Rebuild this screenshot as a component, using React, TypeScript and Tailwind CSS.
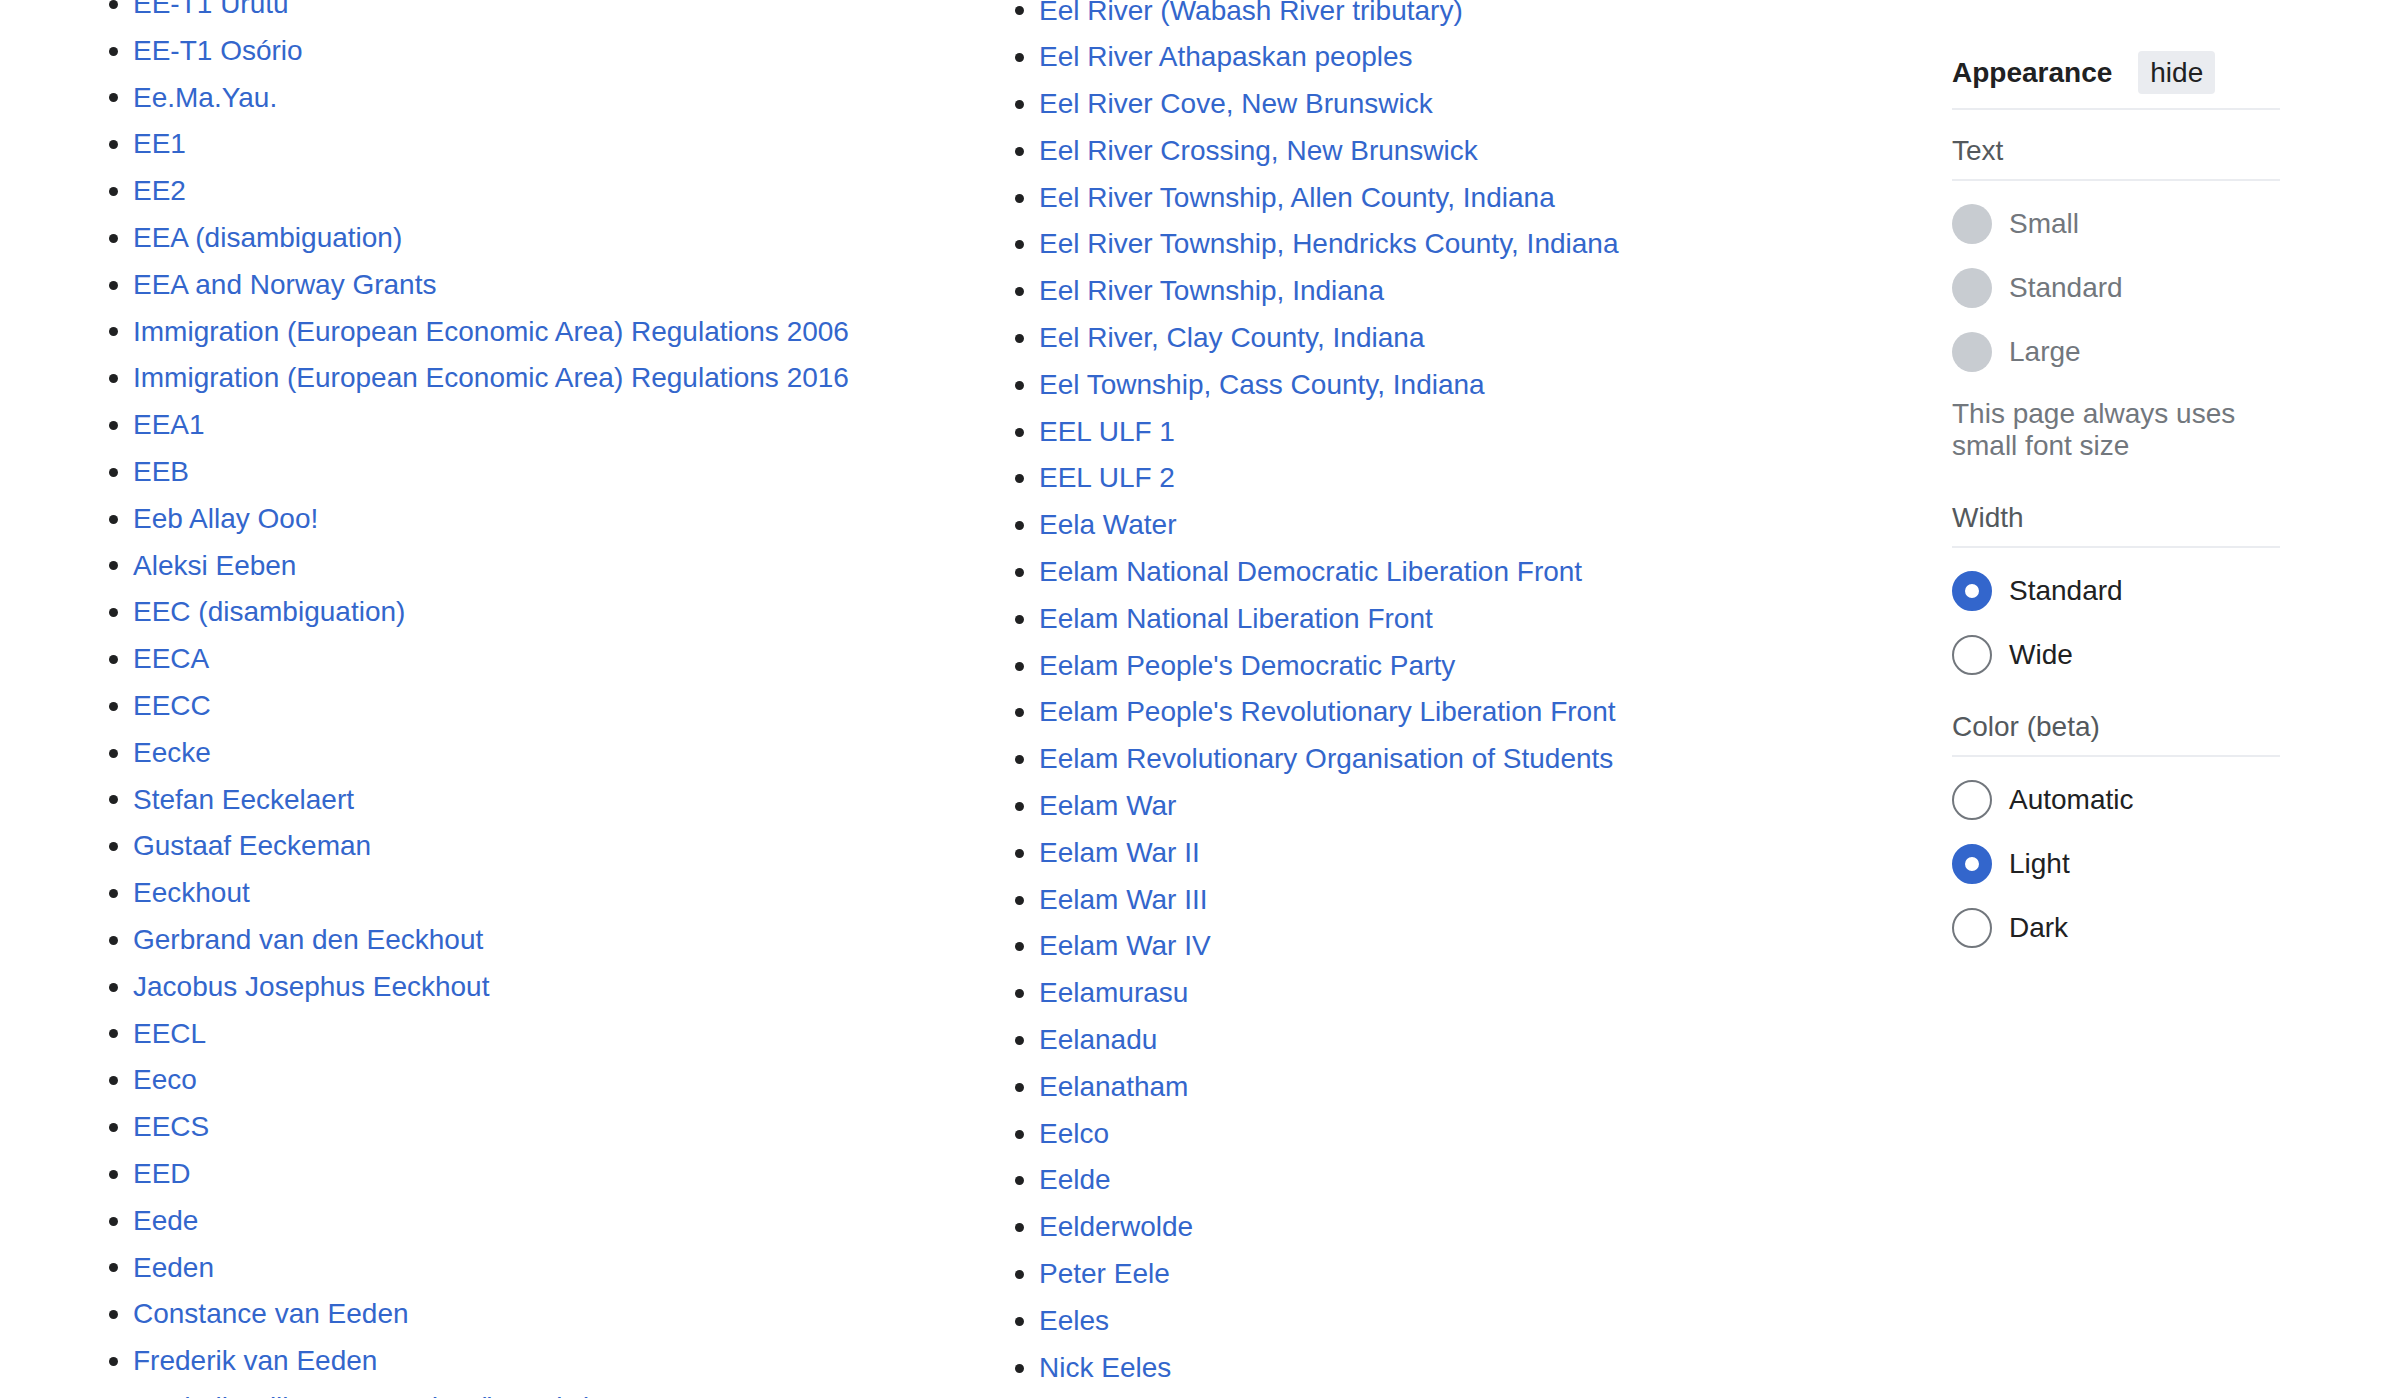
const leftLinks = [
  "EE-T1 Urutu",
  "EE-T1 Osório",
  "Ee.Ma.Yau.",
  "EE1",
  "EE2",
  "EEA (disambiguation)",
  "EEA and Norway Grants",
  "Immigration (European Economic Area) Regulations 2006",
  "Immigration (European Economic Area) Regulations 2016",
  "EEA1",
  "EEB",
  "Eeb Allay Ooo!",
  "Aleksi Eeben",
  "EEC (disambiguation)",
  "EECA",
  "EECC",
  "Eecke",
  "Stefan Eeckelaert",
  "Gustaaf Eeckeman",
  "Eeckhout",
  "Gerbrand van den Eeckhout",
  "Jacobus Josephus Eeckhout",
  "EECL",
  "Eeco",
  "EECS",
  "EED",
  "Eede",
  "Eeden",
  "Constance van Eeden",
  "Frederik van Eeden",
  "Frederik Willem van Eeden (botanist)",
];

const rightLinks = [
  "Eel River (Wabash River tributary)",
  "Eel River Athapaskan peoples",
  "Eel River Cove, New Brunswick",
  "Eel River Crossing, New Brunswick",
  "Eel River Township, Allen County, Indiana",
  "Eel River Township, Hendricks County, Indiana",
  "Eel River Township, Indiana",
  "Eel River, Clay County, Indiana",
  "Eel Township, Cass County, Indiana",
  "EEL ULF 1",
  "EEL ULF 2",
  "Eela Water",
  "Eelam National Democratic Liberation Front",
  "Eelam National Liberation Front",
  "Eelam People's Democratic Party",
  "Eelam People's Revolutionary Liberation Front",
  "Eelam Revolutionary Organisation of Students",
  "Eelam War",
  "Eelam War II",
  "Eelam War III",
  "Eelam War IV",
  "Eelamurasu",
  "Eelanadu",
  "Eelanatham",
  "Eelco",
  "Eelde",
  "Eelderwolde",
  "Peter Eele",
  "Eeles",
  "Nick Eeles",
];

function LinkList({ items, className }: { items: string[]; className: string }) {
  return (
    <ul className={className}>
      {items.map((t) => (
        <li key={t} className="flex items-center h-[44.8px] mb-[2px] whitespace-nowrap">
          <span className="w-[9px] h-[9px] rounded-full bg-[#202122] mr-[15px] shrink-0"></span>
          <a className="text-[#3366cc]">{t}</a>
        </li>
      ))}
    </ul>
  );
}

type Opt = { label: string; state: "disabled" | "on" | "off" };

function Radio({ opt }: { opt: Opt }) {
  const ring =
    opt.state === "disabled"
      ? "bg-[#c8ccd1]"
      : opt.state === "on"
        ? "border-[13px] border-[#3366cc] bg-white"
        : "border-2 border-[#72777d] bg-white";
  const text = opt.state === "disabled" ? "text-[#72777d]" : "text-[#202122]";
  return (
    <div className="flex items-center h-[40px]">
      <span className={`w-[40px] h-[40px] rounded-full shrink-0 ${ring}`}></span>
      <span className={`ml-[17px] ${text}`}>{opt.label}</span>
    </div>
  );
}

function Section({ title, options }: { title: string; options: Opt[] }) {
  return (
    <div>
      <div className="leading-[32px] text-[#54595d] mb-[12px]">{title}</div>
      <div className="h-[2px] bg-[#eaecf0]"></div>
      <div className="flex flex-col gap-[24px] mt-[23px]">
        {options.map((o) => (
          <Radio key={o.label} opt={o} />
        ))}
      </div>
    </div>
  );
}

export default function App() {
  return (
    <div
      className="h-[1398px] w-[2400px] overflow-hidden bg-white text-[28px] leading-[44.8px] text-[#202122]"
      style={{ fontFamily: '"Liberation Sans", Arial, sans-serif' }}
    >
      <div className="flex pl-[109px]">
        <LinkList items={leftLinks} className="w-[906px] -mt-[18px]" />
        <LinkList items={rightLinks} className="w-[937px] -mt-[11.5px]" />
        <aside className="w-[328px] pt-[51px] leading-[32px]">
          <div className="flex items-center h-[43px]">
            <span className="font-bold">Appearance</span>
            <span className="ml-[26px] h-[43px] px-[12px] flex items-center rounded-[4px] bg-[#eaecf0]">
              hide
            </span>
          </div>
          <div className="h-[2px] bg-[#eaecf0] mt-[14px]"></div>
          <div className="mt-[25px]">
            <Section
              title="Text"
              options={[
                { label: "Small", state: "disabled" },
                { label: "Standard", state: "disabled" },
                { label: "Large", state: "disabled" },
              ]}
            />
          </div>
          <p className="mt-[26px] text-[#72777d]">This page always uses small font size</p>
          <div className="mt-[40px]">
            <Section
              title="Width"
              options={[
                { label: "Standard", state: "on" },
                { label: "Wide", state: "off" },
              ]}
            />
          </div>
          <div className="mt-[36px]">
            <Section
              title="Color (beta)"
              options={[
                { label: "Automatic", state: "off" },
                { label: "Light", state: "on" },
                { label: "Dark", state: "off" },
              ]}
            />
          </div>
        </aside>
      </div>
    </div>
  );
}
